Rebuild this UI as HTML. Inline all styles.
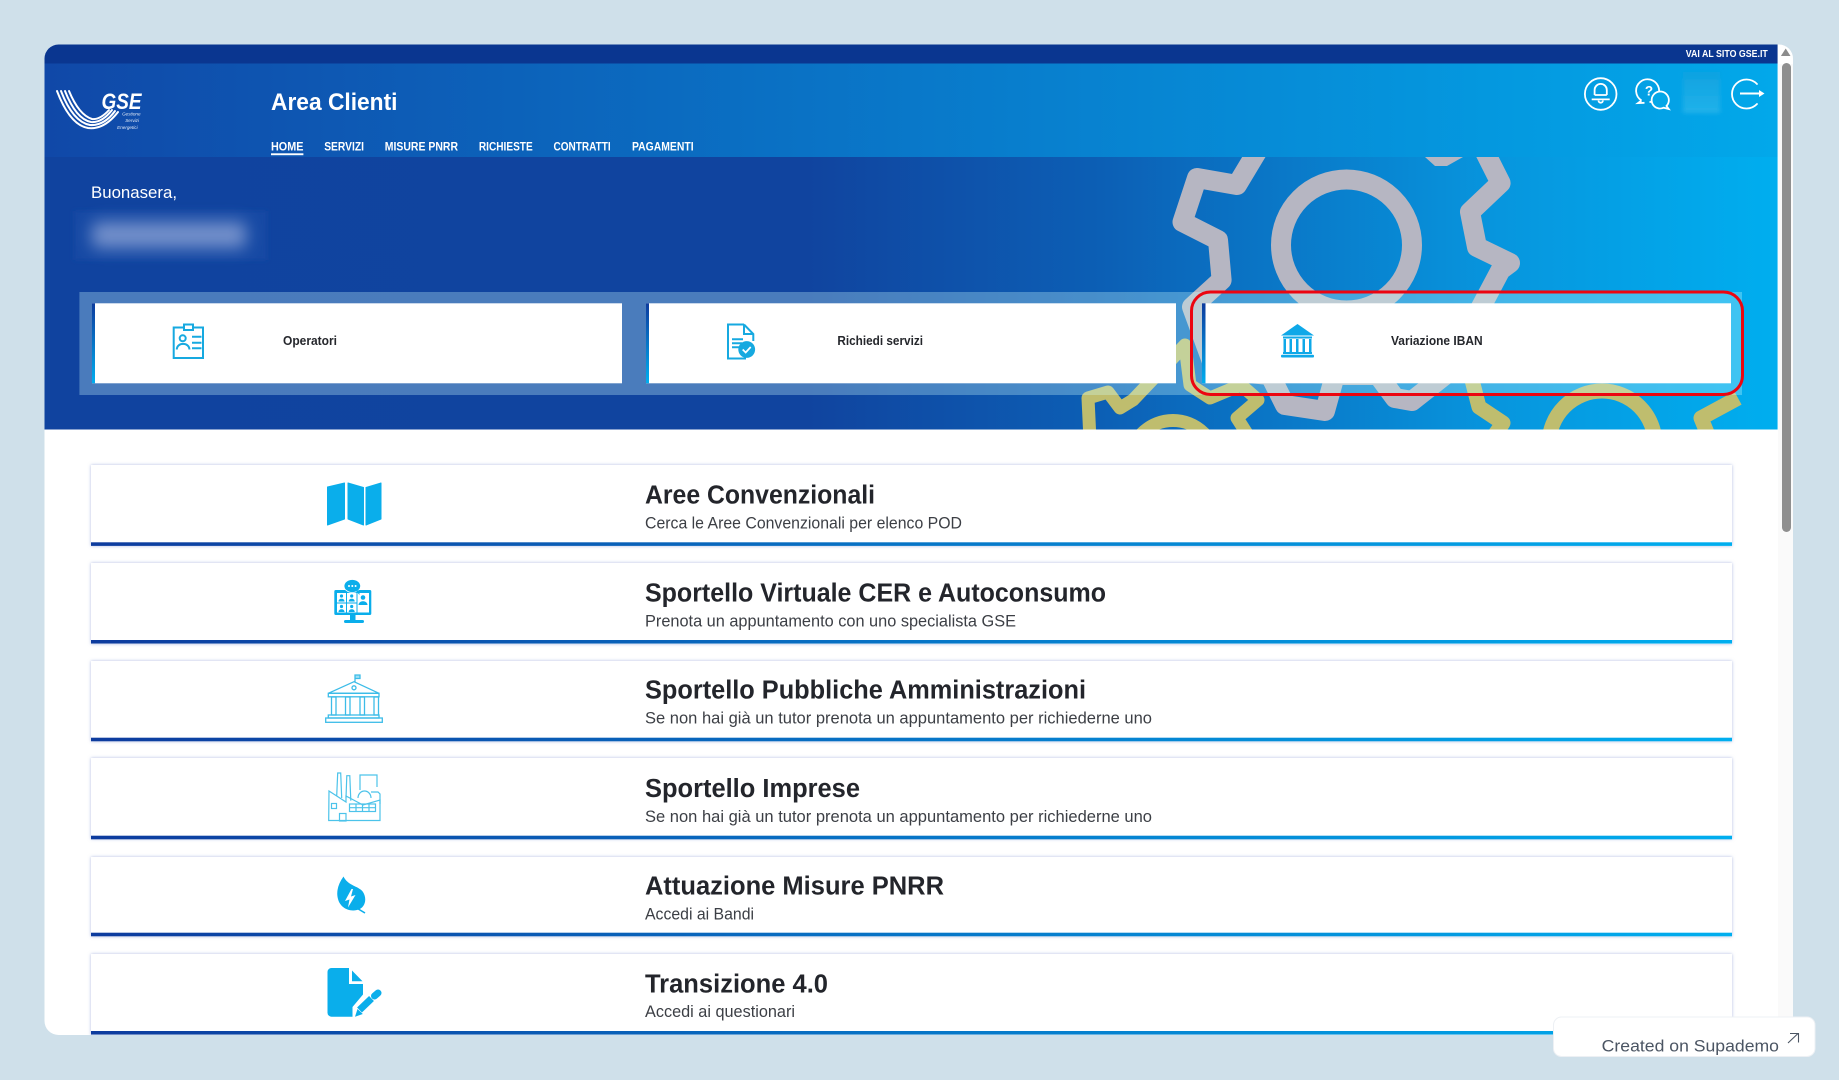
<!DOCTYPE html>
<html lang="it">
<head>
<meta charset="utf-8">
<title>GSE Area Clienti</title>
<style>
html,body{margin:0;padding:0;background:#cfe0ea;width:1839px;height:1080px;overflow:hidden}
svg{display:block}
text{font-family:"Liberation Sans",sans-serif}
.t{font-size:25.5px;font-weight:700;fill:#23252b}
.s{font-size:17px;fill:#3c3f45}
.n{font-size:12px;font-weight:700;fill:#fff}
.c{font-size:12.5px;font-weight:700;fill:#25272c}
</style>
</head>
<body>
<svg width="1839" height="1080" viewBox="0 0 1839 1080" xmlns="http://www.w3.org/2000/svg">
<defs>
<linearGradient id="head" gradientUnits="userSpaceOnUse" x1="44" y1="0" x2="1777" y2="0"><stop offset="0" stop-color="#1048a8"/><stop offset="1" stop-color="#02a8ea"/></linearGradient>
<linearGradient id="hero" gradientUnits="userSpaceOnUse" x1="44" y1="0" x2="1777" y2="0"><stop offset="0" stop-color="#10439f"/><stop offset=".44" stop-color="#10449f"/><stop offset=".61" stop-color="#0c5fb5"/><stop offset=".84" stop-color="#0796de"/><stop offset="1" stop-color="#00aeef"/></linearGradient>
<linearGradient id="line" gradientUnits="userSpaceOnUse" x1="91" y1="0" x2="1732" y2="0"><stop offset="0" stop-color="#0d3b9e"/><stop offset="1" stop-color="#00aeef"/></linearGradient>
<linearGradient id="bar" x1="0" y1="0" x2="0" y2="1"><stop offset="0" stop-color="#0d3b9e"/><stop offset="1" stop-color="#00aeef"/></linearGradient>
<linearGradient id="sq" x1="0" y1="0" x2="0" y2="1"><stop offset="0" stop-color="#0ea2e0"/><stop offset="1" stop-color="#22b2ea"/></linearGradient>
<clipPath id="frame"><path d="M58.5 44.5H1777.7V1035H58.5a14 14 0 0 1-14-14V58.5a14 14 0 0 1 14-14Z"/></clipPath>
<clipPath id="heroclip"><rect x="44.5" y="157" width="1733.2" height="272.5"/></clipPath>
<filter id="sh" x="-2%" y="-10%" width="104%" height="120%"><feDropShadow dx="0" dy="0" stdDeviation="1.6" flood-color="#8f9fd4" flood-opacity=".7"/></filter>
<filter id="b6" x="-30%" y="-80%" width="160%" height="260%"><feGaussianBlur stdDeviation="8"/></filter>
<filter id="b2" x="-30%" y="-30%" width="160%" height="160%"><feGaussianBlur stdDeviation="2"/></filter>
</defs>

<rect width="1839" height="1080" fill="#cfe0ea"/>
<!-- window + scrollbar -->
<rect x="44.5" y="44.5" width="1748.5" height="990.5" rx="14" fill="#fff"/>
<rect x="1778" y="64" width="15" height="971" fill="#fafafa"/>
<path d="M1785.7 48.5l4.8 7.5h-9.6z" fill="#8c8c8c"/>
<rect x="1782" y="63" width="9" height="469" rx="4.5" fill="#8f8f8f"/>

<g clip-path="url(#frame)">
  <!-- top band -->
  <rect x="44.5" y="44.5" width="1733.2" height="19" fill="#0a3690"/>
  <text x="1685.8" y="57" font-size="10" font-weight="700" fill="#fff" textLength="82" lengthAdjust="spacingAndGlyphs">VAI AL SITO GSE.IT</text>
  <!-- header -->
  <rect x="44.5" y="63.5" width="1733.2" height="93.5" fill="url(#head)"/>
  <!-- hero -->
  <rect x="44.5" y="157" width="1733.2" height="272.5" fill="url(#hero)"/>
  <g clip-path="url(#heroclip)">
    <!-- grey gear -->
    <g fill="none" stroke="#b6b6c2" stroke-width="20" stroke-linejoin="round">
      <ellipse cx="1346.5" cy="245" rx="65.5" ry="65.5"/>
      <path d="M1258 150L1237 185L1197 178L1182.5 222L1218 240L1221.6 280L1192 307L1215 370L1270 375L1285 405L1325 411L1335 375L1378 375L1395 398L1412 401L1445 375L1500.6 270L1510 263L1477 247L1470 212L1500.6 183L1484 150"/>
    </g>
    <path d="M1425 157h38l-16 9h-12z" fill="#b6b6c2"/>
    <!-- yellow gears -->
    <g fill="none" stroke="#bfbd6e" stroke-width="13" stroke-linejoin="round">
      <circle cx="1173" cy="464" r="43.5"/>
      <path d="M1090 440L1088 398L1108 392L1120 408L1133 400L1152 380L1185 345L1190 385L1210 398L1241 385L1258 400L1237 418L1251 440"/>
    </g>
    <g fill="none" stroke="#bfbd6e" stroke-width="15" stroke-linejoin="round">
      <circle cx="1602" cy="444" r="53"/>
      <path d="M1472 380L1479 407L1503 423L1491 440M1738 398L1701 418L1710 440"/>
    </g>
  </g>
  <text x="91" y="198" font-size="17" fill="#fff" textLength="86" lengthAdjust="spacingAndGlyphs">Buonasera,</text>
  <!-- blurred name -->
  <rect x="74" y="211" width="193" height="49" fill="#174aa4" filter="url(#b2)"/>
  <rect x="92" y="222" width="154" height="26" rx="6" fill="#7390cb" filter="url(#b6)"/>

  <!-- logo -->
  <g fill="none" stroke="#fff" stroke-width="2" stroke-linecap="round">
    <path d="M57 91Q70 125 88 128Q104 130 118 112"/>
    <path d="M61 91Q73 122 90 125Q104 126 115 111"/>
    <path d="M65 91Q76 119 91 122Q102 123 112 110"/>
    <path d="M69 91Q79 115 92 119Q100 120 109 110"/>
  </g>
  <text x="101.5" y="109" font-size="22" font-weight="700" font-style="italic" fill="#fff" textLength="40" lengthAdjust="spacingAndGlyphs">GSE</text>
  <g font-size="4.6" font-style="italic" fill="#dfe8f6" text-anchor="end">
    <text x="140.5" y="115.5">Gestione</text>
    <text x="139" y="122">Servizi</text>
    <text x="137.6" y="129">Energetici</text>
  </g>

  <text x="271" y="110" font-size="24" font-weight="700" fill="#fff" textLength="126.5" lengthAdjust="spacingAndGlyphs">Area Clienti</text>
  <text class="n" x="271" y="150.4" textLength="32.4" lengthAdjust="spacingAndGlyphs">HOME</text>
  <rect x="271" y="153.3" width="32.4" height="1.9" fill="#fff"/>
  <text class="n" x="324.2" y="150.4" textLength="39.8" lengthAdjust="spacingAndGlyphs">SERVIZI</text>
  <text class="n" x="384.8" y="150.4" textLength="73.2" lengthAdjust="spacingAndGlyphs">MISURE PNRR</text>
  <text class="n" x="478.9" y="150.4" textLength="53.8" lengthAdjust="spacingAndGlyphs">RICHIESTE</text>
  <text class="n" x="553.5" y="150.4" textLength="57.2" lengthAdjust="spacingAndGlyphs">CONTRATTI</text>
  <text class="n" x="632" y="150.4" textLength="61.6" lengthAdjust="spacingAndGlyphs">PAGAMENTI</text>

  <!-- header icons -->
  <g fill="none" stroke="#fff" stroke-width="1.8">
    <circle cx="1600.7" cy="94" r="15.8"/>
    <path d="M1594.6 95v-5a6.1 6.1 0 0 1 12.2 0v5"/>
    <path d="M1594.6 95h12.2M1591.7 99.4h18"/>
    <path d="M1598.5 100.5a2.2 2.2 0 0 0 4.4 0"/>
    <path d="M1641.5 100.5a11.5 11.5 0 1 1 8 1.6"/>
    <path d="M1641.5 100.5l-3.5 2.6l6.500-.3"/>
    <path d="M1654.500 106.500a8.600 8.600 0 1 1 12-.5l2.200 3l-5-1.300a8.600 8.600 0 0 1-9.200-1.200z" fill="#04a7e8"/>
    <path d="M1757 84a14.500 14.500 0 1 0 0 20" stroke-linecap="round"/>
    <path d="M1740 93.500h20" stroke-width="2"/>
  </g>
  <path d="M1759 90l5.500 3.500l-5.500 3.500z" fill="#fff"/>
  <text x="1649" y="95.500" font-size="13.500" font-weight="700" fill="#fff" text-anchor="middle">?</text>
  <rect x="1683" y="72" width="37" height="41" fill="url(#sq)" filter="url(#b2)"/>

  <!-- tile band -->
  <rect x="79.400" y="292" width="1662.600" height="103" fill="#d2ffff" fill-opacity=".3"/>
  <!-- tiles -->
  <rect x="92" y="303.300" width="530" height="80" fill="#fff"/><rect x="92" y="303.300" width="3" height="80" fill="url(#bar)"/>
  <rect x="646" y="303.300" width="530" height="80" fill="#fff"/><rect x="646" y="303.300" width="3" height="80" fill="url(#bar)"/>
  <rect x="1202" y="303.300" width="529" height="80" fill="#fff"/><rect x="1202" y="303.300" width="3.500" height="80" fill="url(#bar)"/>
  <text class="c" x="283" y="345" textLength="54" lengthAdjust="spacingAndGlyphs">Operatori</text>
  <text class="c" x="837.400" y="345" textLength="85.600" lengthAdjust="spacingAndGlyphs">Richiedi servizi</text>
  <text class="c" x="1391" y="345" textLength="91.600" lengthAdjust="spacingAndGlyphs">Variazione IBAN</text>

  <!-- tile icons -->
  <g fill="none" stroke="#16a9e0" stroke-width="2">
    <rect x="173.700" y="327.500" width="29.300" height="30.500"/>
    <rect x="184" y="324.500" width="9" height="5.500" fill="#fff"/>
    <circle cx="182.700" cy="338.300" r="3"/>
    <path d="M176.800 349.500c0-7.500 12.600-7.500 12.600 0"/>
    <path d="M192 336.700h9.500M192 342.700h9.500M192 348.300h9.500"/>
    <path d="M744 324.500h-16v34h18M744 324.500l9.300 9.500v7M744 324.500v9.500h9.300"/>
    <path d="M732 339.300h11M732 343.300h10M732 347.300h7"/>
  </g>
  <circle cx="746.700" cy="349.500" r="8.400" fill="#16a9e0"/>
  <path d="M742.700 349.500l3 3l5-5.500" fill="none" stroke="#fff" stroke-width="1.700"/>
  <g fill="#0ea8e8">
    <path d="M1297.500 324l16.500 11.500h-33z"/>
    <rect x="1283" y="336.500" width="29" height="2"/>
    <rect x="1283.500" y="339" width="2.500" height="13"/><rect x="1289.500" y="339" width="2.500" height="13"/><rect x="1296" y="339" width="2.500" height="13"/><rect x="1302.500" y="339" width="2.500" height="13"/><rect x="1309" y="339" width="2.500" height="13"/>
    <rect x="1283" y="352" width="29" height="2"/>
    <rect x="1281" y="354.800" width="33" height="2.700" rx="1"/>
  </g>

  <!-- list rows -->
  <g filter="url(#sh)" fill="#fff">
    <rect x="91" y="465" width="1641" height="81"/>
    <rect x="91" y="563" width="1641" height="81"/>
    <rect x="91" y="661" width="1641" height="80.500"/>
    <rect x="91" y="758" width="1641" height="81"/>
    <rect x="91" y="857" width="1641" height="79.500"/>
    <rect x="91" y="954" width="1641" height="81"/>
  </g>
  <g fill="url(#line)">
    <rect x="91" y="542.300" width="1641" height="3.600"/>
    <rect x="91" y="640" width="1641" height="3.600"/>
    <rect x="91" y="737.700" width="1641" height="3.600"/>
    <rect x="91" y="835.700" width="1641" height="3.600"/>
    <rect x="91" y="932.700" width="1641" height="3.600"/>
    <rect x="91" y="1031" width="1641" height="3.600"/>
  </g>

  <g transform="translate(0,-0.6)">
  <text class="t" x="645" y="504" textLength="230" lengthAdjust="spacingAndGlyphs">Aree Convenzionali</text>
  <text class="s" x="645" y="529" textLength="317" lengthAdjust="spacingAndGlyphs">Cerca le Aree Convenzionali per elenco POD</text>
  <text class="t" x="645" y="602.300" textLength="461" lengthAdjust="spacingAndGlyphs">Sportello Virtuale CER e Autoconsumo</text>
  <text class="s" x="645" y="627" textLength="371" lengthAdjust="spacingAndGlyphs">Prenota un appuntamento con uno specialista GSE</text>
  <text class="t" x="645" y="699.300" textLength="441" lengthAdjust="spacingAndGlyphs">Sportello Pubbliche Amministrazioni</text>
  <text class="s" x="645" y="724" textLength="507" lengthAdjust="spacingAndGlyphs">Se non hai già un tutor prenota un appuntamento per richiederne uno</text>
  <text class="t" x="645" y="797.700" textLength="215" lengthAdjust="spacingAndGlyphs">Sportello Imprese</text>
  <text class="s" x="645" y="822.700" textLength="507" lengthAdjust="spacingAndGlyphs">Se non hai già un tutor prenota un appuntamento per richiederne uno</text>
  <text class="t" x="645" y="895" textLength="299" lengthAdjust="spacingAndGlyphs">Attuazione Misure PNRR</text>
  <text class="s" x="645" y="920" textLength="109" lengthAdjust="spacingAndGlyphs">Accedi ai Bandi</text>
  <text class="t" x="645" y="993" textLength="183" lengthAdjust="spacingAndGlyphs">Transizione 4.0</text>
  <text class="s" x="645" y="1017.700" textLength="150" lengthAdjust="spacingAndGlyphs">Accedi ai questionari</text>
  </g>

  <!-- map -->
  <g fill="#0aaeeb" stroke="#0aaeeb" stroke-width="1" stroke-linejoin="round">
    <path d="M327.500 487l17-4v36l-17 6z"/>
    <path d="M348 483l15.500 4.500v37.500l-15.500-6z"/>
    <path d="M366 487.500l15-4.500v36l-15 6z"/>
  </g>

  <!-- virtual desk -->
  <g>
    <rect x="334.300" y="590" width="37" height="25" rx="1.500" fill="#0aaeeb"/>
    <rect x="350" y="615" width="5.500" height="5" fill="#0aaeeb"/>
    <rect x="344" y="620" width="20" height="3" rx="1.500" fill="#0aaeeb"/>
    <g fill="#fff">
      <rect x="337" y="593" width="9" height="9.500"/><rect x="347" y="593" width="9.500" height="9.500"/>
      <rect x="337" y="603.500" width="9" height="9"/><rect x="347" y="603.500" width="9.500" height="9"/>
      <rect x="357.500" y="593" width="11.500" height="19.500"/>
    </g>
    <g fill="#0aaeeb">
      <circle cx="341.500" cy="596" r="1.600"/><path d="M338.500 601.500c0-3.600 6-3.600 6 0z"/>
      <circle cx="351.700" cy="596" r="1.600"/><path d="M348.700 601.500c0-3.600 6-3.600 6 0z"/>
      <circle cx="341.500" cy="606.500" r="1.600"/><path d="M338.500 612c0-3.600 6-3.600 6 0z"/>
      <circle cx="351.700" cy="606.500" r="1.600"/><path d="M348.700 612c0-3.600 6-3.600 6 0z"/>
      <circle cx="363" cy="597.500" r="2.300"/><path d="M358.500 605c0-5 9-5 9 0z"/>
    </g>
    <ellipse cx="352.300" cy="586" rx="8.300" ry="6.500" fill="#0aaeeb" stroke="#fff" stroke-width=".8"/>
    <path d="M356 591l3.500 4v-5z" fill="#0aaeeb"/>
    <circle cx="349" cy="586" r="1" fill="#fff"/><circle cx="352.300" cy="586" r="1" fill="#fff"/><circle cx="355.600" cy="586" r="1" fill="#fff"/>
  </g>

  <!-- public administration -->
  <g fill="none" stroke="#3cbce8" stroke-width="1.300">
    <path d="M355 682v-7h5v3.500h-5" fill="#9fe0f5"/>
    <path d="M354 681.700l-25.700 11.600h50.700z"/>
    <circle cx="354" cy="687.800" r="2"/>
    <rect x="328.300" y="693.300" width="50.700" height="3.500"/>
    <rect x="331.500" y="697" width="4.500" height="18"/>
    <rect x="345.500" y="697" width="4.500" height="18"/>
    <rect x="360" y="697" width="4.500" height="18"/>
    <rect x="374" y="697" width="4.500" height="18"/>
    <rect x="328.300" y="715" width="50.700" height="3"/>
    <rect x="325.700" y="718" width="56.600" height="4.300"/>
  </g>

  <!-- factory -->
  <g fill="none" stroke="#4cc3ea" stroke-width="1.200">
    <path d="M336.700 796l1-23h3l1 25M346 798l.8-22.300h3l1 25"/>
    <path d="M360 790v-15h17v12"/>
    <path d="M358 798a6.500 7 0 0 1 13 0"/>
    <path d="M371 792h7l2 2v10"/>
    <path d="M329 791l17 11v-6l17 9l17-5v20.500h-51.300z"/>
    <rect x="349.500" y="804" width="26" height="7.500"/>
    <path d="M356 804v7.500M362.500 804v7.500M369 804v7.500M349.500 807.700h26"/>
    <rect x="331.500" y="803.500" width="5" height="5"/>
    <rect x="339.500" y="813.500" width="6.500" height="7.500"/>
  </g>

  <!-- leaf -->
  <path d="M343.500 876.500C338 884 336 892 338 899C340 907 348 912 357 910C366 908 367 898 363 892C359 886 348 886 343.500 876.500Z" fill="#0aaeeb"/>
  <path d="M355 907l10 6" stroke="#0aaeeb" stroke-width="1.600" fill="none"/>
  <path d="M351.500 889l-6.500 12l4.500-1.500l-1.500 8l7.500-12.500l-4.500 1.500l2-7.500z" fill="#fff"/>

  <!-- document with pen -->
  <path d="M331.500 968H349V984H363V994.500L352.500 1007V1016.700H331.500a4 4 0 0 1-4-4V972a4 4 0 0 1 4-4Z" fill="#0aaeeb"/>
  <path d="M352 970.500L362.500 981.300H352Z" fill="#0aaeeb"/>
  <path d="M355 1016.700L357.500 1009L362.800 1014Z" fill="#0aaeeb"/>
  <path d="M359.500 1010L371.500 998.500" stroke="#0aaeeb" stroke-width="7" fill="none"/>
  <path d="M374.500 996L378 993" stroke="#0aaeeb" stroke-width="7" stroke-linecap="round" fill="none"/>
</g>

<!-- highlight -->
<rect x="1191.500" y="292" width="551" height="102.500" rx="19" fill="none" stroke="#ec0510" stroke-width="3"/>

<!-- badge -->
<rect x="1553.500" y="1017" width="261.500" height="39.500" rx="8" fill="#fff" stroke="#edf0f4" stroke-width="1"/>
<text x="1601.700" y="1051.700" font-size="16.500" fill="#4b5563" textLength="177.300" lengthAdjust="spacingAndGlyphs">Created on Supademo</text>
<path d="M1788 1043l10-9.500M1790 1033.500h8.500v9" fill="none" stroke="#4b5563" stroke-width="1.100"/>
</svg>
</body>
</html>
